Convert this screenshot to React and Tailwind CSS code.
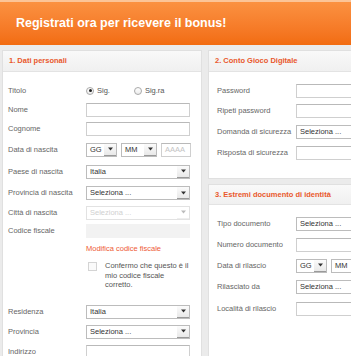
import React from "react";

const Label = ({ children, w = "w-[78px]" }) => (
  <span className={`${w} shrink-0 text-[7.5px] text-[#666]`}>{children}</span>
);

const TextInput = ({ w = "w-[104px]", placeholder, disabled }) => (
  <div
    className={`${w} h-[14px] shrink-0 flex items-center pl-[3px] text-[7.5px] ${
      disabled
        ? "bg-[#f2f2f2]"
        : "bg-white border border-[#cfcfcf] border-t-[#b9b9b9]"
    }`}
  >
    {placeholder && <span className="text-[#c4c4c4]">{placeholder}</span>}
  </div>
);

const Arrow = ({ disabled }) => (
  <svg width="5" height="4" viewBox="0 0 5 4">
    <path d="M0 0.5h5L2.5 3.5z" fill={disabled ? "#bbb" : "#333"} />
  </svg>
);

const Select = ({ value, w = "w-[104px]", disabled }) => (
  <div
    className={`${w} h-[14px] shrink-0 flex items-stretch border bg-white ${
      disabled ? "border-[#e2e2e2]" : "border-[#bcbcbc]"
    }`}
  >
    <span
      className={`flex-1 flex items-center pl-[3px] text-[7.5px] whitespace-nowrap overflow-hidden ${
        disabled ? "text-[#d0d0d0]" : "text-[#333]"
      }`}
    >
      {value}
    </span>
    <span
      className={`w-[12px] flex items-center justify-center border-b ${
        disabled
          ? "bg-white border-[#eee]"
          : "bg-gradient-to-b from-[#fbfbfb] to-[#e9e9e9] border-[#9a9a9a]"
      }`}
    >
      <Arrow disabled={disabled} />
    </span>
  </div>
);

const DateRow = () => (
  <div className="flex items-center gap-[4px]">
    <Select value="GG" w="w-[31px]" />
    <Select value="MM" w="w-[36px]" />
    <TextInput w="w-[30px]" placeholder="AAAA" />
  </div>
);

const PanelHeader = ({ children, h = "h-[21px]" }) => (
  <div
    className={`${h} flex items-center pl-[6px] bg-gradient-to-b from-[#f9f9f9] to-[#f0f0f0] border-b border-[#e3e3e3] text-[7.5px] font-bold text-[#e9582c]`}
  >
    {children}
  </div>
);

const Radio = ({ checked }) => (
  <span className="w-[8px] h-[8px] rounded-full border border-[#a9a9a9] bg-gradient-to-b from-white to-[#ececec] flex items-center justify-center">
    {checked && <span className="w-[3px] h-[3px] rounded-full bg-[#222]" />}
  </span>
);

export default function App() {
  return (
    <div className="w-[351px] h-[356px] overflow-hidden bg-[#ebebeb] font-['Liberation_Sans',Arial,sans-serif]">
      <div className="h-[45px] flex items-center pl-[16px] border-t-[2px] border-[#fcc496] bg-gradient-to-b from-[#fb9140] to-[#f26c10]">
        <h1 className="text-[12.5px] font-bold text-white">
          Registrati ora per ricevere il bonus!
        </h1>
      </div>

      <div className="flex gap-[6px] pt-[5px] pl-[2px]">
        {/* 1. Dati personali */}
        <div className="w-[200px] shrink-0 h-[320px] border border-[#e0e0e0] bg-white">
          <PanelHeader>1. Dati personali</PanelHeader>
          <div className="pl-[5px] pt-[9px]">
            <div className="h-[19px] flex items-center">
              <Label>Titolo</Label>
              <div className="flex items-center gap-[3px] text-[7.5px] text-[#555]">
                <Radio checked />
                <span>Sig.</span>
                <span className="w-[18px]" />
                <Radio />
                <span>Sig.ra</span>
              </div>
            </div>
            <div className="h-[19px] flex items-center">
              <Label>Nome</Label>
              <TextInput />
            </div>
            <div className="h-[20px] flex items-center">
              <Label>Cognome</Label>
              <TextInput />
            </div>
            <div className="h-[21px] flex items-center">
              <Label>Data di nascita</Label>
              <DateRow />
            </div>
            <div className="h-[23px] flex items-center">
              <Label>Paese di nascita</Label>
              <Select value="Italia" />
            </div>
            <div className="h-[20px] flex items-center">
              <Label>Provincia di nascita</Label>
              <Select value="Seleziona ..." />
            </div>
            <div className="h-[19px] flex items-center">
              <Label>Città di nascita</Label>
              <Select value="Seleziona ..." disabled />
            </div>
            <div className="h-[18px] flex items-center">
              <Label>Codice fiscale</Label>
              <TextInput disabled />
            </div>
            <div className="h-[18px] flex items-center pl-[78px]">
              <span className="text-[7.5px] text-[#ee5a36]">Modifica codice fiscale</span>
            </div>
            <div className="flex pt-[3px] pl-[80px] gap-[8px]">
              <span className="w-[9px] h-[9px] mt-[1px] shrink-0 border border-[#d4d4d4] bg-[#fafafa]" />
              <p className="w-[86px] text-[7.5px] leading-[9.5px] text-[#555]">
                Confermo che questo è il mio codice fiscale corretto.
              </p>
            </div>
            <div className="h-[20px] mt-[12px] flex items-center">
              <Label>Residenza</Label>
              <Select value="Italia" />
            </div>
            <div className="h-[20px] flex items-center">
              <Label>Provincia</Label>
              <Select value="Seleziona ..." />
            </div>
            <div className="h-[20px] flex items-center">
              <Label>Indirizzo</Label>
              <TextInput />
            </div>
          </div>
        </div>

        {/* right column */}
        <div className="flex flex-col gap-[5px] w-[200px] shrink-0">
          <div className="border border-[#e0e0e0] bg-white">
            <PanelHeader>2. Conto Gioco Digitale</PanelHeader>
            <div className="pl-[8px] pt-[8px] pb-[15px]">
              <div className="h-[21px] flex items-center">
                <Label w="w-[79px]">Password</Label>
                <TextInput />
              </div>
              <div className="h-[20px] flex items-center">
                <Label w="w-[79px]">Ripeti password</Label>
                <TextInput />
              </div>
              <div className="h-[21px] flex items-center">
                <Label w="w-[79px]">Domanda di sicurezza</Label>
                <Select value="Seleziona ..." />
              </div>
              <div className="h-[21px] flex items-center">
                <Label w="w-[79px]">Risposta di sicurezza</Label>
                <TextInput />
              </div>
            </div>
          </div>

          <div className="h-[200px] border border-[#e0e0e0] bg-white">
            <PanelHeader h="h-[20px]">3. Estremi documento di identità</PanelHeader>
            <div className="pl-[8px] pt-[8px]">
              <div className="h-[22px] flex items-center">
                <Label w="w-[79px]">Tipo documento</Label>
                <Select value="Seleziona ..." />
              </div>
              <div className="h-[20px] flex items-center">
                <Label w="w-[79px]">Numero documento</Label>
                <TextInput />
              </div>
              <div className="h-[21px] flex items-center">
                <Label w="w-[79px]">Data di rilascio</Label>
                <DateRow />
              </div>
              <div className="h-[22px] flex items-center">
                <Label w="w-[79px]">Rilasciato da</Label>
                <Select value="Seleziona ..." />
              </div>
              <div className="h-[21px] flex items-center">
                <Label w="w-[79px]">Località di rilascio</Label>
                <TextInput />
              </div>
            </div>
          </div>
        </div>
      </div>
    </div>
  );
}
